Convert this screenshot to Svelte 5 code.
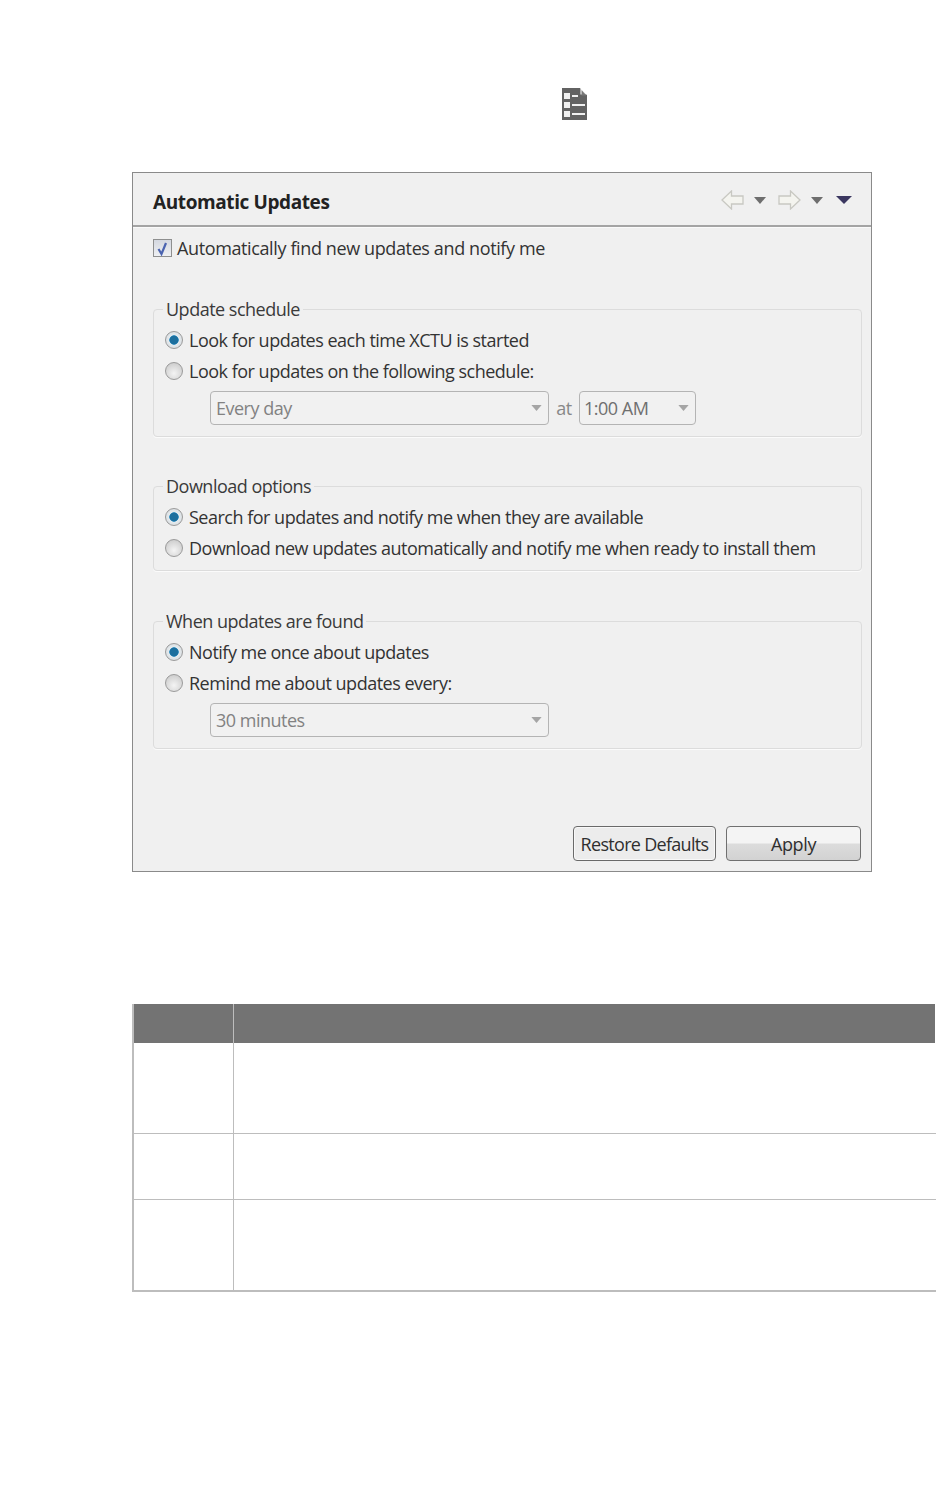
<script lang="ts">
	const schedule = ['Look for updates each time XCTU is started', 'Look for updates on the following schedule:'];
	const download = [
		'Search for updates and notify me when they are available',
		'Download new updates automatically and notify me when ready to install them'
	];
	const found = ['Notify me once about updates', 'Remind me about updates every:'];
	const rows = [91, 66, 90];
</script>

{#snippet radios(items: string[])}
	{#each items as label, i}
		<div class="radio-row">
			<span class="radio" class:checked={i === 0}></span>
			<span>{label}</span>
		</div>
	{/each}
{/snippet}

{#snippet caret()}
	<svg class="caret" viewBox="0 0 12 7" width="11" height="6"><path d="M0 0h12L6 7z" /></svg>
{/snippet}

<div class="page">
	<div class="top-icon">
		<svg viewBox="0 0 25 32" width="25" height="32">
			<path d="M0 0h18l7 7v25H0z" fill="#626262" />
			<path d="M18.500 0v6.500H25z" fill="#fff" />
			<path d="M19.500 2l5 5.500h-5z" fill="#777" />
			<g fill="#f0f0f0">
				<rect x="2" y="5" width="6" height="6" />
				<rect x="2" y="14" width="6" height="6" />
				<rect x="2" y="23" width="6" height="6" />
				<rect x="10" y="7" width="6" height="2" />
				<rect x="10" y="16" width="13" height="2" />
				<rect x="10" y="25" width="13" height="2" />
			</g>
		</svg>
	</div>

	<section class="panel">
		<header>
			<h1>Automatic Updates</h1>
			<div class="nav">
				<svg viewBox="0 0 23 20" width="23" height="20">
					<path d="M1 10l9.500-9v5h11.500v8H10.500v5z" fill="#f4f4ef" stroke="#c8c8c2" stroke-width="1.300" />
				</svg>
				<svg class="tri" viewBox="0 0 12 7" width="12" height="7"><path d="M0 0h12L6 7z" fill="#6e6e6e" /></svg>
				<svg class="fwd" viewBox="0 0 23 20" width="23" height="20">
					<path d="M22 10l-9.500-9v5H1v8h11.500v5z" fill="#f4f4ef" stroke="#c8c8c2" stroke-width="1.300" />
				</svg>
				<svg class="tri" viewBox="0 0 12 7" width="12" height="7"><path d="M0 0h12L6 7z" fill="#6e6e6e" /></svg>
				<svg class="tri last" viewBox="0 0 16 8" width="16" height="8"><path d="M0 0h16L8 8z" fill="#3b3760" /></svg>
			</div>
		</header>

		<div class="auto-check">
			<span class="checkbox">
				<svg viewBox="0 0 15 15" width="15" height="15">
					<path d="M3.500 8L6.500 13 11 2" fill="none" stroke="#4a63b0" stroke-width="2.200" />
				</svg>
			</span>
			<span>Automatically find new updates and notify me</span>
		</div>

		<fieldset class="schedule">
			<legend>Update schedule</legend>
			{@render radios(schedule)}
			<div class="combo-row">
				<div class="combo wide"><span>Every day</span>{@render caret()}</div>
				<span class="at">at</span>
				<div class="combo time"><span>1:00 AM</span>{@render caret()}</div>
			</div>
		</fieldset>

		<fieldset class="download">
			<legend>Download options</legend>
			{@render radios(download)}
		</fieldset>

		<fieldset class="found">
			<legend>When updates are found</legend>
			{@render radios(found)}
			<div class="combo-row">
				<div class="combo wide"><span>30 minutes</span>{@render caret()}</div>
			</div>
		</fieldset>

		<div class="actions">
			<button class="restore">Restore Defaults</button>
			<button class="apply">Apply</button>
		</div>
	</section>

	<table>
		<thead>
			<tr><th></th><th></th></tr>
		</thead>
		<tbody>
			{#each rows as h}
				<tr style="height: {h}px"><td></td><td></td></tr>
			{/each}
		</tbody>
	</table>
</div>

<style>
	:global(body) {
		background: #fff;
		overflow-x: hidden;
	}

	.page {
		height: 1494px;
		overflow: hidden;
		padding-top: 88px;
		box-sizing: border-box;
		font-family: 'Open Sans', 'Noto Sans', sans-serif;
		font-size: 18px;
		color: #333;
	}

	.top-icon {
		height: 32px;
		margin-left: 562px;
	}

	.top-icon svg {
		display: block;
	}

	.panel {
		box-sizing: border-box;
		width: 740px;
		height: 700px;
		margin: 52px 0 0 132px;
		background: #f0f0f0;
		border: 1px solid #8a8a8a;
		display: flex;
		flex-direction: column;
		letter-spacing: -0.38px;
		position: relative;
	}

	header {
		height: 54px;
		flex: none;
		box-sizing: border-box;
		border-bottom: 2px solid #a4a4a4;
		box-shadow: 0 1px 0 #fafafa;
		display: flex;
		align-items: center;
		justify-content: space-between;
		padding: 5px 19px 0 20px;
	}

	h1 {
		margin: 0;
		font-size: 19px;
		font-weight: 700;
		letter-spacing: -0.4px;
		color: #222;
	}

	.nav {
		display: flex;
		align-items: center;
		margin-top: -3px;
	}

	.tri {
		margin-left: 10px;
	}

	.fwd {
		margin-left: 12px;
	}

	.tri.last {
		margin-left: 13px;
	}

	.auto-check {
		display: flex;
		align-items: center;
		gap: 5px;
		margin: 9px 0 0 20px;
		height: 24px;
	}

	.checkbox {
		width: 19px;
		height: 18px;
		box-sizing: border-box;
		border: 1px solid #8e8f8f;
		background: linear-gradient(#d4d8e0, #eef0f3);
		display: flex;
		align-items: center;
		justify-content: center;
	}

	fieldset {
		margin: 0 9px 0 20px;
		padding: 0 0 0 11px;
		border: 1px solid #dcdcdc;
		border-radius: 4px;
		box-shadow: 0 1px 0 #fbfbfb;
		flex: none;
		box-sizing: border-box;
		letter-spacing: -0.5px;
	}

	legend {
		padding: 0 3px;
		margin-left: -2px;
		line-height: 22px;
		color: #3a3a3a;
	}

	.schedule {
		margin-top: 38px;
		height: 139px;
	}

	.download {
		margin-top: 38px;
		height: 96px;
	}

	.found {
		margin-top: 39px;
		height: 139px;
	}

	.radio-row {
		display: flex;
		align-items: center;
		gap: 6px;
		height: 31.5px;
	}

	.radio-row:first-of-type {
		margin-top: 4px;
	}

	.radio {
		width: 18px;
		height: 18px;
		box-sizing: border-box;
		border-radius: 50%;
		border: 1px solid #9a9a9a;
		background: radial-gradient(circle at 50% 65%, #f4f4f4, #c4c4c4);
		flex: none;
	}

	.radio.checked {
		background: radial-gradient(circle, #1c6f9e 0 4px, #3f95c4 4.500px, #e6ebee 5px, #cfd4d8);
	}

	.combo-row {
		display: flex;
		align-items: center;
		margin: 4px 0 0 45px;
	}

	.combo {
		box-sizing: border-box;
		height: 34px;
		border: 1px solid #b4b4b4;
		border-radius: 4px;
		background: #f1f1f1;
		display: flex;
		align-items: center;
		justify-content: space-between;
		padding: 0 6px 0 5px;
		color: #828282;
	}

	.combo.wide {
		width: 339px;
	}

	.combo.time {
		width: 117px;
		color: #6f6f6f;
		padding-left: 4px;
	}

	.caret {
		fill: #a5a5a5;
	}

	.at {
		width: 30px;
		text-align: center;
		color: #888;
	}

	.actions {
		margin-top: auto;
		display: flex;
		justify-content: flex-end;
		gap: 10px;
		padding: 0 10px 10px 0;
	}

	button {
		box-sizing: border-box;
		height: 35px;
		padding: 0;
		font: inherit;
		letter-spacing: inherit;
		color: #2f2f2f;
		border: 1px solid #707070;
		border-radius: 4px;
		background: linear-gradient(#f4f4f4 0 48%, #dcdcdc 52%, #d2d2d2);
	}

	.restore {
		width: 143px;
		letter-spacing: -0.7px;
		border-color: #6a6a6a;
		background: #ececec;
		box-shadow: inset 0 0 0 1px #f8f8f8;
	}

	.apply {
		width: 135px;
	}

	table {
		margin: 132px 0 0 132px;
		width: 804px;
		table-layout: fixed;
		border-collapse: separate;
		border-spacing: 0;
		border-left: 2px solid #bdbdbd;
		border-bottom: 2px solid #bdbdbd;
	}

	th {
		height: 39px;
		padding: 0;
		background: #737373;
	}

	th:last-child {
		border-right: 1px solid #fff;
	}

	th:first-child,
	td:first-child {
		width: 99px;
		border-right: 1px solid #bdbdbd;
	}

	td {
		padding: 0;
		background: #fff;
		border-bottom: 1px solid #bdbdbd;
	}

	tbody tr:last-child td {
		border-bottom: 0;
	}
</style>
